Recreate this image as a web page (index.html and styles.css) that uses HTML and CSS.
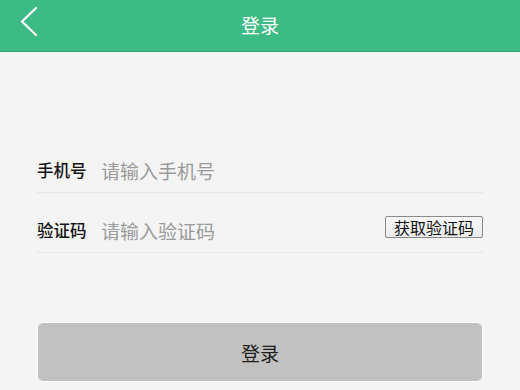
FILE: index.html
```html
<!doctype html>
<html lang="zh-CN">
<head>
  <meta charset="utf-8">
  <title>登录</title>
  <link rel="stylesheet" href="styles.css">
</head>
<body>
  <div class="header">
    <a href="#" class="back">
      <svg width="20" height="32" viewBox="0 0 20 32">
        <polyline points="16,2 2,15.5 16,29" fill="none" stroke="#fff" stroke-width="2.2" stroke-linecap="round" stroke-linejoin="round"/>
      </svg>
    </a>
    <div class="title">登录</div>
  </div>

  <div class="form">
    <div class="row">
      <span class="label">手机号</span>
      <input class="field" placeholder="请输入手机号">
    </div>
    <div class="row">
      <span class="label">验证码</span>
      <input class="field" placeholder="请输入验证码">
      <button class="get-code">获取验证码</button>
    </div>

    <button class="submit">登录</button>
  </div>
</body>
</html>
```

FILE: styles.css
```css
body {
  margin: 0;
  background: #f4f4f4;
  font-family: "Noto Sans CJK SC", "Noto Sans", sans-serif;
}

.header {
  height: 51px;
  background: #3dbb84;
  border-bottom: 1px solid #34a673;
  display: flex;
  align-items: center;
  justify-content: center;
  position: relative;
}
.header .back {
  position: absolute;
  left: 20px;
  top: 6px;
  display: block;
}
.header .title {
  color: #fff;
  font-size: 19px;
  margin-top: -3px;
}

.form {
  padding: 96px 37px 0;
}
.row {
  display: flex;
  align-items: center;
  height: 44px;
  border-bottom: 1px solid #e6e6e6;
  margin-bottom: 15px;
}
.row .label {
  font-size: 16.5px;
  font-weight: 500;
  color: #111;
  width: 64px;
  flex: none;
}
.row .field {
  flex: 1;
  min-width: 0;
  border: none;
  outline: none;
  background: transparent;
  font-family: inherit;
  font-size: 19px;
  padding: 0;
  color: #333;
}
.row .field::placeholder {
  color: #9a9a9a;
}
.get-code {
  flex: none;
  width: 98px;
  height: 22px;
  margin-top: -6px;
  padding: 0;
  border: 1px solid #8a8a8a;
  border-radius: 2px;
  background: linear-gradient(#f7f7f7, #ececec);
  font-family: inherit;
  font-size: 16px;
  line-height: 18px;
  color: #111;
}

.submit {
  display: block;
  width: 100%;
  height: 60px;
  margin-top: 69px;
  border: 1px solid #fbfbfb;
  border-radius: 6px;
  background: #c1c1c1;
  font-family: inherit;
  font-size: 19px;
  color: #1e1e1e;
}
```
